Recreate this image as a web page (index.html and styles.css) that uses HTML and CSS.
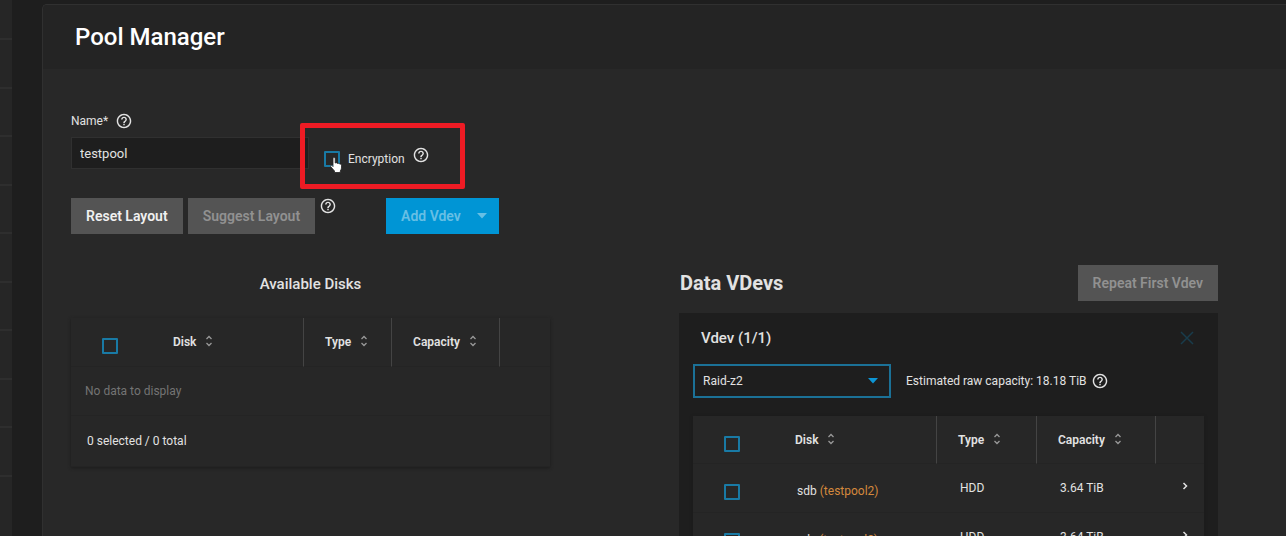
FILE: index.html
```
<!DOCTYPE html>
<html lang="en">
<head>
<meta charset="utf-8">
<title>Pool Manager</title>
<link rel="stylesheet" href="styles.css">
</head>
<body>
<svg class="defs" aria-hidden="true">
  <symbol id="help" viewBox="1 1 22 22"><path fill="currentColor" d="M11 18h2v-2h-2v2zm1-16C6.480 2 2 6.480 2 12s4.480 10 10 10 10-4.480 10-10S17.520 2 12 2zm0 18c-4.410 0-8-3.590-8-8s3.590-8 8-8 8 3.590 8 8-3.590 8-8 8zm0-14c-2.210 0-4 1.790-4 4h2c0-1.100.9-2 2-2s2 .9 2 2c0 2-3 1.750-3 5h2c0-2.250 3-2.500 3-5 0-2.210-1.790-4-4-4z"/></symbol>
  <symbol id="sort" viewBox="0 0 8 12"><path fill="none" stroke="currentColor" stroke-width="1.300" d="M1.500 4 4 1.500 6.500 4M1.500 8 4 10.500 6.500 8"/></symbol>
  <symbol id="caret" viewBox="0 0 10 6"><path fill="currentColor" d="M0 0h10L5 5.500z"/></symbol>
  <symbol id="chevron" viewBox="0 0 6 8"><path fill="none" stroke="currentColor" stroke-width="1.500" d="M1.500 1 4.500 4 1.500 7"/></symbol>
</svg>
<div class="app">
  <nav class="rail" aria-label="Main"><ul class="rail-list"><li></li><li></li><li></li><li></li><li></li><li></li><li></li><li></li><li></li><li></li></ul></nav>
  <main class="card">
    <header class="card-header"><h1>Pool Manager</h1></header>
    <div class="card-body">
      <div class="fields">
        <div class="name-field">
          <div class="label-row"><label for="name">Name*</label><svg class="help"><use href="#help"/></svg></div>
          <input class="text-input" id="name" type="text" value="testpool">
        </div>
        <div class="encryption">
          <input class="check" id="encryption" type="checkbox">
          <label for="encryption">Encryption</label>
          <svg class="help help-raised"><use href="#help"/></svg>
          <svg class="pointer" viewBox="0 0 12 16" aria-hidden="true"><path fill="#fff" stroke="#222" stroke-width=".8" d="M3 1.500C3 .2 5.200.2 5.200 1.500V6l1.200-.3 1 .7 1.300-.2.800.8 1.200.1.800 1V11c0 1-.8 2-1.200 3v1.500H4.500V14L.8 9.800C0 8.500 1.200 7.800 2 8.600l1 1z"/></svg>
          <span class="highlight"></span>
        </div>
      </div>
      <div class="actions">
        <button class="btn" type="button">Reset Layout</button>
        <button class="btn" type="button" disabled>Suggest Layout</button>
        <svg class="help"><use href="#help"/></svg>
        <button class="btn btn-primary" type="button">Add Vdev <svg class="caret"><use href="#caret"/></svg></button>
      </div>
      <div class="columns">
        <section>
          <h2 class="disks-title">Available Disks</h2>
          <table class="disks available">
            <colgroup><col class="c-check"><col><col class="c-type"><col class="c-cap"><col class="c-end"></colgroup>
            <thead><tr>
              <th class="cell-check"><input class="check" type="checkbox" aria-label="Select all available disks"></th>
              <th>Disk <svg class="sort"><use href="#sort"/></svg></th>
              <th class="ruled">Type <svg class="sort"><use href="#sort"/></svg></th>
              <th class="ruled">Capacity <svg class="sort"><use href="#sort"/></svg></th>
              <th class="ruled"></th>
            </tr></thead>
            <tbody><tr><td class="empty" colspan="5">No data to display</td></tr></tbody>
            <tfoot><tr><td class="total" colspan="5">0 selected / 0 total</td></tr></tfoot>
          </table>
        </section>
        <section>
          <div class="vdev-head"><h2 class="vdev-title">Data VDevs</h2><button class="btn" type="button" disabled>Repeat First Vdev</button></div>
          <div class="panel">
            <div class="panel-head"><h3>Vdev (1/1)</h3><button class="close" type="button" aria-label="Remove vdev" disabled><svg viewBox="0 0 14 14"><path fill="none" stroke="currentColor" stroke-width="1.500" d="m1 1 12 12M13 1 1 13"/></svg></button></div>
            <div class="raid-row">
              <div class="select-wrap"><select class="select" aria-label="Vdev layout"><option>Raid-z2</option></select><svg class="caret select-caret"><use href="#caret"/></svg></div>
              <span class="estimate">Estimated raw capacity: 18.18 TiB <svg class="help"><use href="#help"/></svg></span>
            </div>
            <table class="disks members">
              <colgroup><col class="c-check"><col><col class="c-type"><col class="c-cap"><col class="c-end"></colgroup>
              <thead><tr>
                <th class="cell-check"><input class="check" type="checkbox" aria-label="Select all vdev disks"></th>
                <th>Disk <svg class="sort"><use href="#sort"/></svg></th>
                <th class="ruled">Type <svg class="sort"><use href="#sort"/></svg></th>
                <th class="ruled">Capacity <svg class="sort"><use href="#sort"/></svg></th>
                <th class="ruled"></th>
              </tr></thead>
              <tbody>
                <tr><td class="cell-check"><input class="check" type="checkbox" aria-label="Select sdb"></td><td class="disk-name">sdb <span class="pool">(testpool2)</span></td><td>HDD</td><td>3.64 TiB</td><td class="cell-more"><button class="more" type="button" aria-label="Show sdb details"><svg><use href="#chevron"/></svg></button></td></tr>
                <tr><td class="cell-check"><input class="check" type="checkbox" aria-label="Select sdc"></td><td class="disk-name">sdc <span class="pool">(testpool2)</span></td><td>HDD</td><td>3.64 TiB</td><td class="cell-more"><button class="more" type="button" aria-label="Show sdc details"><svg><use href="#chevron"/></svg></button></td></tr>
              </tbody>
            </table>
          </div>
        </section>
      </div>
    </div>
  </main>
</div>
</body>
</html>
```
FILE: styles.css
```
* { box-sizing: border-box; }
body { margin: 0; background: #1e1e1e; color: #e2e2e2; font: 12px/20px Roboto, sans-serif; }
h1, h2, h3 { margin: 0; font-weight: 500; }
input, select, button { font: inherit; color: inherit; margin: 0; }
svg { flex: none; }
.defs { position: absolute; width: 0; height: 0; }
.app { display: flex; height: 100vh; overflow: hidden; }
.rail { width: 12px; background: #262626; margin-right: 30px; flex: none; }
.rail-list { list-style: none; margin: 0; padding: 0; }
.rail-list li { height: 49px; border-bottom: 2px solid #2e2e2e; }
.rail-list li:nth-child(odd) { height: 48px; }
.rail-list li:first-child { height: 40px; }
.card { flex: 1; margin-top: 4px; height: max-content; min-height: 100vh; background: #282828; border: 1px solid #303030; border-right: 0; border-top-left-radius: 5px; }
.card-header { height: 64px; padding: 0 32px; background: #242424; display: flex; align-items: center; border-top-left-radius: 4px; }
h1 { font-size: 24px; line-height: 32px; color: #fff; }
.card-body { padding: 42px 68px 0 28px; }
.fields { display: flex; align-items: flex-end; gap: 15px; }
.name-field { width: 238px; }
.label-row { display: flex; align-items: center; gap: 8px; margin-bottom: 6px; }
.help { width: 16px; height: 16px; }
.text-input { display: block; width: 100%; height: 32px; padding: 0 8px; background: #1e1e1e; border: 1px solid #303030; font-size: 13px; }
.encryption { position: relative; display: flex; align-items: center; height: 20px; }
.encryption label { margin: 0 8px; }
.help-raised { margin-bottom: 8px; }
.highlight { position: absolute; inset: -26px -36px -20px -24px; border: 5px solid #ee1b24; border-radius: 2px; pointer-events: none; }
.pointer { position: absolute; left: 6px; top: 8px; width: 12px; height: 16px; }
.check { appearance: none; display: block; width: 16px; height: 16px; border: 2px solid #197aa5; border-radius: 1px; }
.actions { display: flex; gap: 5px; margin-top: 29px; }
.btn { height: 36px; padding: 0 15px; border: 0; background: #545454; font: 600 14px/20px Roboto, sans-serif; color: #f0f0f0; white-space: nowrap; }
.btn:disabled { color: #919191; }
.btn-primary { display: flex; align-items: center; gap: 16px; background: #0095d5; color: #67bfe4; padding-right: 12px; margin-left: 45px; }
.caret { width: 10px; height: 6px; }
.columns { display: grid; grid-template-columns: 8fr 9fr; gap: 129px; margin-top: 31px; align-items: start; }
.disks-title { text-align: center; font-size: 15px; line-height: 38px; margin-bottom: 15px; }
.vdev-head { display: flex; justify-content: space-between; align-items: center; margin-bottom: 12px; padding-left: 1px; }
.vdev-title { font-weight: 700; font-size: 20px; line-height: 28px; }
.disks { width: 100%; table-layout: fixed; border-collapse: separate; border-spacing: 0; background: #272727; box-shadow: 0 1px 3px #1c1c1c; }
.disks th, .disks td { padding: 0 0 0 22px; text-align: left; vertical-align: middle; border-bottom: 1px solid #242424; white-space: nowrap; }
.disks th { height: 49px; font-weight: 600; }
.members th { height: 48px; }
.disks td { height: 49px; padding-left: 24px; }
.disks th.ruled { border-left: 1px solid #444; padding-left: 21px; }
.disks .cell-check { padding: 8px 0 0 31px; }
.disks .empty { padding-left: 14px; color: #747474; }
.disks .total { padding-left: 16px; height: 51px; }
.disks .disk-name { padding-top: 5px; }
.sort { width: 8px; height: 12px; margin-left: 6px; vertical-align: -1px; color: #999; }
.c-check { width: 80px; }
.c-type { width: 88px; }
.c-cap { width: 108px; }
.c-end { width: 51px; }
.members .c-type { width: 100px; }
.members .c-cap { width: 119px; }
.members .c-end { width: 49px; }
.pool { color: #d5893d; }
.disks .cell-more { padding: 0 0 4px 20px; }
.more { display: block; width: 20px; height: 20px; padding: 0; border: 0; background: none; }
.more svg { display: block; width: 6px; height: 8px; margin: auto; }
.panel { background: #1e1e1e; padding: 14px; }
.panel-head { display: flex; justify-content: space-between; align-items: center; height: 22px; padding: 0 10px 0 8px; margin-bottom: 15px; }
h3 { font-size: 15px; line-height: 22px; }
.close { width: 14px; height: 14px; padding: 0; border: 0; background: none; color: #193c4b; }
.close svg { display: block; width: 14px; height: 14px; }
.raid-row { display: flex; align-items: center; gap: 15px; margin-bottom: 18px; }
.select-wrap { position: relative; width: 198px; }
.select { appearance: none; display: block; width: 100%; height: 34px; padding: 0 8px; border: 2px solid #1b7197; border-radius: 0; background: #1e1e1e; }
.select-caret { position: absolute; right: 13px; top: 14px; color: #0d95d4; }
.estimate { display: flex; align-items: center; gap: 5px; }
```
